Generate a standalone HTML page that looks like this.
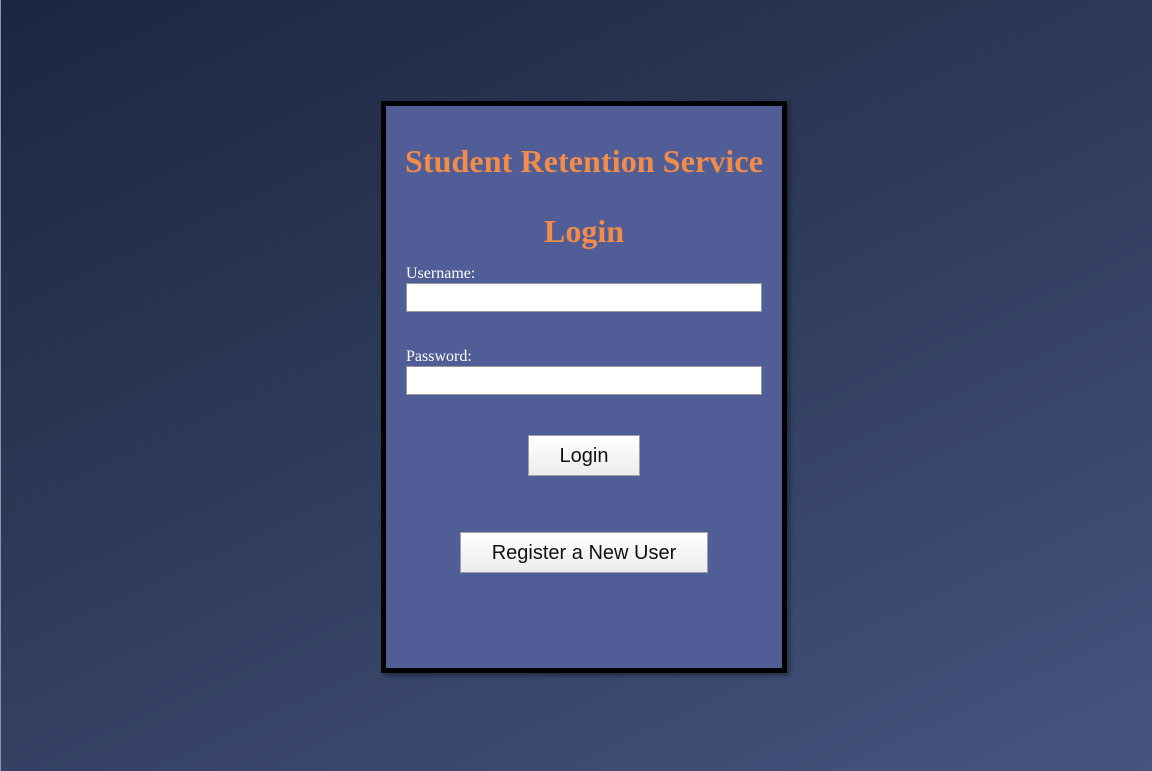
<!DOCTYPE html>
<html><head><style>
html,body{margin:0;padding:0;width:1152px;height:771px;overflow:hidden}
body{background:linear-gradient(155deg,#1c2640 0%,#2e3a5a 45%,#45557f 100%);position:relative;font-family:"Liberation Serif",serif;border-left:1px solid #8a93a8;box-sizing:border-box}
.card{position:absolute;left:380px;top:101px;width:396px;height:562px;border:5px solid #000;background:#505d96;box-shadow:3px 3px 4px rgba(0,0,0,.35)}
h1{position:absolute;left:0;width:396px;top:37px;margin:0;text-align:center;color:#f28c48;font-size:32px;font-weight:bold;letter-spacing:0.1px}
h2{position:absolute;left:0;width:396px;top:107px;margin:0;text-align:center;color:#f28c48;font-size:32px;font-weight:bold}
.lbl{position:absolute;left:20px;color:#fff;font-size:16px}
.inp{position:absolute;left:20px;background:#fff;border:1px solid #999;width:354px;height:27px}
.btn{position:absolute;height:39px;border:1px solid #a0a0a0;background:linear-gradient(#fff,#ececec);font-family:"Liberation Sans",sans-serif;font-size:20px;color:#111;text-align:center;line-height:41px}
</style></head><body>
<div class="card">
<h1>Student Retention Service</h1>
<h2>Login</h2>
<div class="lbl" style="top:159px">Username:</div>
<div class="inp" style="top:177px"></div>
<div class="lbl" style="top:242px">Password:</div>
<div class="inp" style="top:260px"></div>
<div class="btn" style="left:142px;top:329px;width:110px">Login</div>
<div class="btn" style="left:74px;top:426px;width:246px">Register a New User</div>
</div>
</body></html>
